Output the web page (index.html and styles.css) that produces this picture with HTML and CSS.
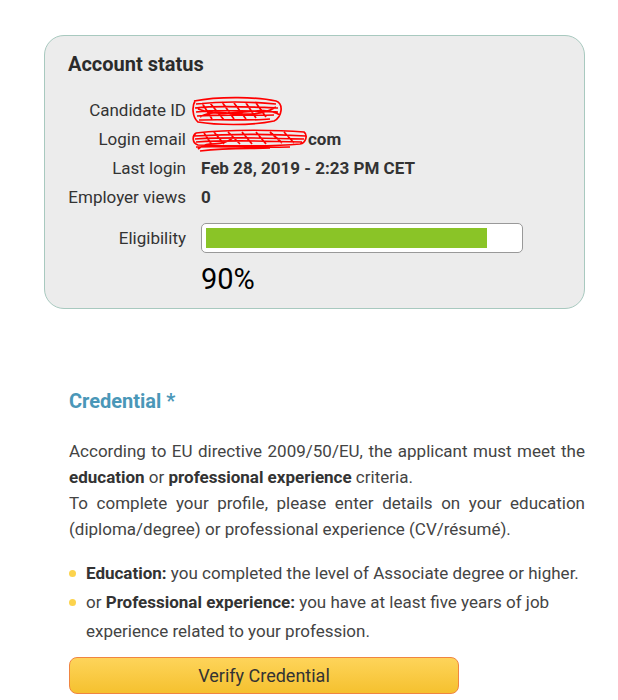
FILE: index.html
```html
<!DOCTYPE html>
<html lang="en">
<head>
    <meta charset="UTF-8">
    <meta name="viewport" content="width=device-width, initial-scale=1.0">
    <title>Candidate Profile</title>
    <link rel="stylesheet" href="styles.css">
</head>
<body>
    <div class="page">
        <div class="status-card">
            <h2>Account status</h2>
            <div class="status-grid">
                <span class="label">Candidate ID</span>
                <span class="value">
                    <svg class="scribble" width="94" height="32" viewBox="0 0 94 32">
                        <path d="M4 6 C30 1 68 2 86 6 C94 9 92 22 84 26 C60 31 25 30 8 27 C2 22 2 11 5 6 M6 9 C35 6 65 7 86 9 M5 13 C30 10 60 12 88 13 M6 17 C30 14 60 16 88 17 M7 21 C35 19 60 21 84 20 M9 25 C35 24 60 26 80 24 M12 8 L22 24 M20 8 L34 25 M32 7 L44 24 M44 8 L56 24 M56 8 L66 23 M66 8 L76 22 M8 14 C40 26 70 8 90 20 M10 22 C30 10 60 28 86 12" fill="none" stroke="#f00" stroke-width="1.7"/>
                    </svg>
                </span>
                <span class="label">Login email</span>
                <span class="value">
                    <svg class="scribble" width="118" height="26" viewBox="0 0 118 26">
                        <path d="M6 6 C40 2 90 3 114 5 C118 8 116 16 110 17 C80 20 40 19 8 18 C2 16 2 9 6 6 M4 9 C40 7 80 7 116 9 M5 12 C40 10 80 11 114 12 M6 15 C40 13 80 14 112 15 M6 20 C30 19 60 21 100 20 M10 24 C40 20 60 22 80 21 M14 6 L22 18 M24 5 L34 17 M38 5 L50 17 M52 5 L62 17 M66 5 L76 17 M80 5 L92 16 M94 5 L104 16 M8 22 C20 12 30 22 44 10" fill="none" stroke="#f00" stroke-width="1.7"/>
                    </svg>com
                </span>
                <span class="label">Last login</span>
                <span class="value">Feb 28, 2019 - 2:23 PM CET</span>
                <span class="label">Employer views</span>
                <span class="value">0</span>
                <span class="label label-bar">Eligibility</span>
                <div class="progress">
                    <div class="progress-fill" style="width: 90%"></div>
                </div>
                <span></span>
                <span class="percent">90%</span>
            </div>
        </div>

        <div class="credential">
            <h3>Credential *</h3>
            <p>According to EU directive 2009/50/EU, the applicant must meet the <strong>education</strong> or <strong>professional experience</strong> criteria.<br>
            To complete your profile, please enter details on your education (diploma/degree) or professional experience (CV/résumé).</p>
            <ul>
                <li><strong>Education:</strong> you completed the level of Associate degree or higher.</li>
                <li>or <strong>Professional experience:</strong> you have at least five years of job experience related to your profession.</li>
            </ul>
            <button class="verify">Verify Credential</button>
        </div>
    </div>
</body>
</html>
```

FILE: styles.css
```css
body {
    margin: 0;
    font-family: Roboto, "Liberation Sans", sans-serif;
    background-color: #fff;
    color: #333;
}
.page {
    padding: 35px 33px 0 44px;
}
.status-card {
    background-color: #ececec;
    border: 1px solid #a8c9bf;
    border-radius: 20px;
    padding: 15px 23px 9px 23px;
    width: 493px;
}
.status-card h2 {
    margin: 0 0 19px 0;
    font-size: 20px;
    font-weight: bold;
    color: #2b2b2b;
    line-height: 26px;
}
.status-grid {
    display: grid;
    grid-template-columns: 118px 322px;
    column-gap: 15px;
    row-gap: 0;
    align-items: center;
}
.label {
    text-align: right;
    font-size: 17px;
    line-height: 29px;
    color: #333;
}
.value {
    font-size: 17px;
    line-height: 29px;
    height: 29px;
    font-weight: bold;
    color: #333;
    display: flex;
    align-items: center;
}
.scribble {
    display: block;
    margin: -2px 0 -2px -11px;
}
.label-bar {
    margin-top: 11px;
}
.progress {
    margin-top: 11px;
    border: 1px solid #999;
    border-radius: 5px;
    background-color: #fff;
    padding: 4px;
    box-sizing: border-box;
    height: 30px;
}
.progress-fill {
    height: 100%;
    background-color: #8ac427;
}
.percent {
    font-size: 29px;
    line-height: 40px;
    color: #000;
    margin-top: 6px;
}
.credential {
    margin-top: 79px;
    padding-left: 25px;
    width: 516px;
}
.credential h3 {
    margin: 0 0 24px 0;
    font-size: 20px;
    line-height: 26px;
    color: #4a97b8;
}
.credential p {
    margin: 0;
    font-size: 17px;
    line-height: 26px;
    text-align: justify;
    color: #444;
}
.credential strong {
    color: #333;
}
.credential ul {
    list-style: none;
    margin: 17px 0 11px 0;
    padding: 0;
}
.credential li {
    position: relative;
    padding-left: 17px;
    font-size: 17px;
    line-height: 29px;
    color: #444;
}
.credential li::before {
    content: "";
    position: absolute;
    left: 0;
    top: 11px;
    width: 7px;
    height: 7px;
    border-radius: 50%;
    background-color: #fcd34d;
}
.verify {
    width: 390px;
    height: 37px;
    background: linear-gradient(#fed45a, #f5c12f);
    border: 1px solid #f08541;
    border-radius: 8px;
    font-family: Roboto, "Liberation Sans", sans-serif;
    font-size: 18px;
    color: #333;
    cursor: pointer;
}
```
